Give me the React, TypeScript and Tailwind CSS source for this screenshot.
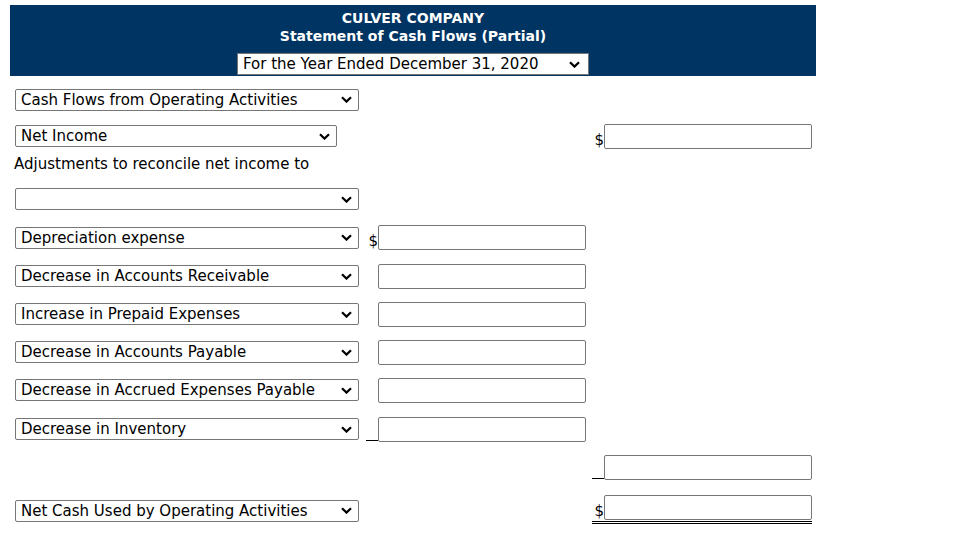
const font = { fontFamily: '"DejaVu Sans", Verdana, sans-serif' };

function Chevron() {
  return (
    <svg width="11" height="7" viewBox="0 0 11 7" className="pointer-events-none">
      <path d="M1 1.2 L5.5 5.6 L10 1.2" fill="none" stroke="#000" strokeWidth="2.2" />
    </svg>
  );
}

function Select({ label, w }: { label: string; w: string }) {
  return (
    <div className={`${w} h-[22px] flex items-center justify-between border border-[#767676] rounded-[2px] bg-white pl-[5px] pr-[6px]`}>
      <span className="text-[15px] leading-none text-black whitespace-nowrap pt-[1px]">{label}</span>
      <Chevron />
    </div>
  );
}

function Box() {
  return <div className="w-[208px] h-[25px] border border-[#767676] rounded-[2px] bg-white" />;
}

function Prefix({ kind, w }: { kind: 'none' | 'dollar' | 'line'; w: string }) {
  return (
    <div className={`${w} h-[25px] flex items-end justify-end`}>
      {kind === 'dollar' && <span className="text-[15px] leading-[17px]">$</span>}
      {kind === 'line' && <span className="w-[12px] h-px bg-black mb-[1px]" />}
    </div>
  );
}

const middleRows: { label: string; pre: 'none' | 'dollar' | 'line'; h: string }[] = [
  { label: 'Depreciation expense', pre: 'dollar', h: 'h-[39px]' },
  { label: 'Decrease in Accounts Receivable', pre: 'none', h: 'h-[38px]' },
  { label: 'Increase in Prepaid Expenses', pre: 'none', h: 'h-[38px]' },
  { label: 'Decrease in Accounts Payable', pre: 'none', h: 'h-[38px]' },
  { label: 'Decrease in Accrued Expenses Payable', pre: 'none', h: 'h-[38px]' },
  { label: 'Decrease in Inventory', pre: 'line', h: 'h-[40px]' },
];

export default function App() {
  return (
    <div className="w-[953px] h-[537px] bg-white text-black pt-[5px] pl-[10px]" style={font}>
      <div className="w-[806px] h-[71px] bg-[#003462] flex flex-col items-center pt-[4px]">
        <div className="text-white font-bold text-[14px] leading-[18px]">CULVER COMPANY</div>
        <div className="text-white font-bold text-[14px] leading-[18px]">Statement of Cash Flows (Partial)</div>
        <div className="mt-[8px] w-[352px] h-[22px] flex items-center justify-between border border-[#767676] bg-white pl-[5px] pr-[8px]">
          <span className="text-[15px] leading-none pt-[1px]">For the Year Ended December 31, 2020</span>
          <Chevron />
        </div>
      </div>

      <div className="pl-[5px]">
        <div className="h-[47px] flex items-center">
          <Select label="Cash Flows from Operating Activities" w="w-[344px]" />
        </div>

        <div className="h-[26px] flex items-center">
          <Select label="Net Income" w="w-[322px]" />
          <div className="w-[249px]" />
          <Prefix kind="dollar" w="w-[18px]" />
          <Box />
        </div>

        <div className="h-[31px] flex items-center -ml-[1px]">
          <span className="text-[15px] leading-none">Adjustments to reconcile net income to</span>
        </div>

        <div className="h-[38px] flex items-center">
          <Select label="" w="w-[344px]" />
        </div>

        {middleRows.map((r) => (
          <div key={r.label} className={`${r.h} flex items-center`}>
            <Select label={r.label} w="w-[344px]" />
            <div className="w-[3px]" />
            <Prefix kind={r.pre} w="w-[16px]" />
            <Box />
          </div>
        ))}

        <div className="h-[37px] flex items-center">
          <div className="w-[571px]" />
          <Prefix kind="line" w="w-[18px]" />
          <Box />
        </div>

        <div className="h-[49px] flex items-center">
          <Select label="Net Cash Used by Operating Activities" w="w-[344px]" />
          <div className="w-[233px]" />
          <div className="flex border-b-[3px] border-double border-black pb-[1px] -mt-[3px]">
            <Prefix kind="dollar" w="w-[12px]" />
            <Box />
          </div>
        </div>
      </div>
    </div>
  );
}
